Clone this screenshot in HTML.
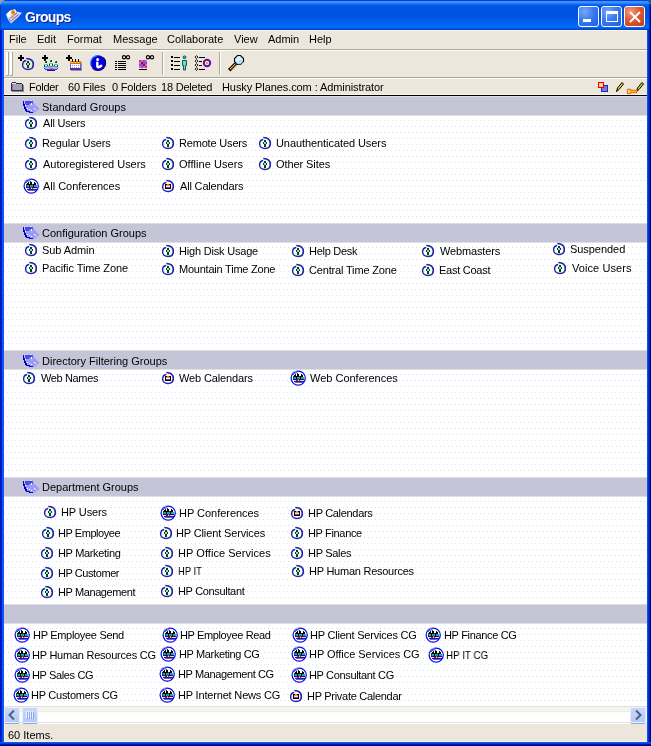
<!DOCTYPE html>
<html><head><meta charset="utf-8">
<style>
*{margin:0;padding:0;box-sizing:border-box}
html,body{width:651px;height:746px;overflow:hidden;background:#A7B4C4}
body{position:relative;font-family:"Liberation Sans",sans-serif;font-size:11px;color:#000}
.abs{position:absolute}
.t{position:absolute;font:11px/13px "Liberation Sans",sans-serif;white-space:nowrap;color:#000;will-change:transform}
.ic{position:absolute;overflow:visible}
#win{position:absolute;left:0;top:0;width:651px;height:746px;background:#0831D9;border-radius:7px 7px 0 0;overflow:hidden}
#title{position:absolute;left:0;top:0;width:651px;height:30px;
 background:linear-gradient(to bottom,#0A3FCE 0px,#0A3FCE 1px,#3A93FF 1px,#3A8FFF 3px,#0F6EF8 4px,#0661F0 5px,#0057E5 6px,#0053DE 8px,#0054E3 17px,#005AE9 20px,#0064F2 24px,#006CFB 27px,#0068F5 28px,#0046D2 29px,#0040C8 30px)}
#ttl{will-change:transform;position:absolute;left:25px;top:9px;font:bold 14px/16px "Liberation Sans",sans-serif;letter-spacing:-0.7px;color:#fff;text-shadow:1px 1px 0 #0A1E8C}
.tb{position:absolute;top:6px;width:21px;height:21px;border:1px solid #fff;border-radius:3px;
 background:radial-gradient(circle at 30% 25%,#77A7FF 0,#3A7BF2 45%,#2258DC 100%)}
.tb.cl{background:radial-gradient(circle at 30% 25%,#F29B80 0,#E0592F 45%,#C63A14 100%)}
#menu{position:absolute;left:4px;top:30px;width:643px;height:20px;background:#ECE6DD;border-bottom:1px solid #A9A994;box-shadow:inset 0 1px 0 #FFF6E8}
#menu span{position:absolute;top:3px;font:11px/13px "Liberation Sans",sans-serif;will-change:transform}
#tool{position:absolute;left:4px;top:50px;width:643px;height:28px;background:#ECE6DD;border-top:1px solid #fff;border-bottom:1px solid #A8A890}
#fbar{position:absolute;left:4px;top:78px;width:643px;height:18px;background:#ECE6DD;border-top:1px solid #fff;border-bottom:1px solid #000;box-shadow:inset 0 -1px 0 #FFF4E8}
.sec{position:absolute;left:4px;width:643px;background:#fff;overflow:hidden}
.sec .dots{position:absolute;left:0;top:0}
.hdr{position:absolute;left:0;top:0;width:643px;height:20px;background:#C6C5D7;border-top:1px solid #D9DFE2;border-bottom:1px solid #DCE3DF}
#hscroll{position:absolute;left:4px;top:706px;width:643px;height:18px;background:linear-gradient(to bottom,#E2E1DC 0,#E2E1DC 1px,#F4F4EC 1px,#F4F4EC 5px,#EAEAF8 5px,#EAEAF8 6px,#FFFBEE 6px,#FFFBEE 7px,#FFFFFF 7px,#FFFFFF 16px,#E6E3DE 16px,#E6E3DE 17px,#FFFFFF 17px)}
.sbb{position:absolute;top:1px;width:16px;height:16px;border-radius:2px;background:linear-gradient(to bottom,#C9D9FC,#B6CAF7);box-shadow:inset 0 0 0 1px #E8EEFC, 0 1px 0 #8EA8E0}
#status{position:absolute;left:4px;top:724px;width:643px;height:18px;background:#ECE6DD;border-bottom:1px solid #FCF2E2;border-left:1px solid #FCF2E2}
</style></head><body>
<svg width="0" height="0" style="position:absolute">
 <defs>
  <pattern id="dp" x="0" y="0" width="4" height="12" patternUnits="userSpaceOnUse">
   <rect x="0" y="0" width="1" height="1" fill="#D6DFFB"/>
   <rect x="3" y="6" width="1" height="1" fill="#D6DFFB"/>
  </pattern>
  <symbol id="ring" viewBox="0 0 14 14">
   <path d="M5.2 3.5 C2.8 3.8 1.6 5.9 1.6 8 C1.6 10.6 3.8 12.5 7 12.5 C10.2 12.5 12.4 10.6 12.4 7.6 C12.4 4.4 10.6 1.6 5.3 1.5" fill="none" stroke="#2424A8" stroke-width="1.45"/>
   <path d="M11.2 4 C12.6 6 12.6 9 11.2 10.8" fill="none" stroke="#2424A8" stroke-width="1"/>
  </symbol>
  <symbol id="iu" viewBox="0 0 14 14">
   <use href="#ring" width="14" height="14"/>
   <g shape-rendering="crispEdges">
   <rect x="6" y="4" width="2" height="7" fill="#004A00"/>
   <rect x="5" y="6" width="4" height="2" fill="#004A00"/>
   <rect x="6" y="6" width="2" height="2" fill="#6CE6F6"/>
   </g>
  </symbol>
  <symbol id="ik" viewBox="0 0 14 14">
   <use href="#ring" width="14" height="14"/>
   <g shape-rendering="crispEdges">
   <rect x="4" y="5" width="6" height="5" fill="#000"/>
   <rect x="5" y="6" width="4" height="1" fill="#F89A10"/>
   <rect x="6" y="5" width="2" height="1" fill="#D88A20"/>
   <rect x="5" y="7" width="4" height="1" fill="#ECEEFF"/>
   <rect x="5" y="8" width="4" height="1" fill="#9030D8"/>
   </g>
  </symbol>
  <symbol id="ic" viewBox="0 0 17 17">
   <circle cx="8.2" cy="8.1" r="7.1" fill="#fff" stroke="#0A0AEA" stroke-width="1.25"/>
   <path d="M1.6 3.6 Q3.6 1.1 6.8 1" fill="none" stroke="#A8A8F8" stroke-width="1"/>
   <path d="M2.8 5 Q4.6 2.8 7.2 2.6" fill="none" stroke="#3030D8" stroke-width="0.9"/>
   <g shape-rendering="crispEdges">
   <rect x="3" y="7" width="11" height="2" fill="#20A8A8"/>
   <rect x="3" y="6" width="1" height="4" fill="#005A28"/>
   <rect x="13" y="7" width="1" height="3" fill="#30B0A0"/>
   <rect x="4" y="5" width="2" height="2" fill="#000"/>
   <rect x="5" y="4" width="1" height="1" fill="#003000"/>
   <rect x="7" y="4" width="2" height="3" fill="#000"/>
   <rect x="7" y="3" width="1" height="1" fill="#006000"/>
   <rect x="11" y="5" width="2" height="2" fill="#000"/>
   <rect x="11" y="4" width="1" height="1" fill="#003000"/>
   <rect x="6" y="6" width="1" height="3" fill="#000"/>
   <rect x="10" y="6" width="1" height="3" fill="#000"/>
   <rect x="9" y="6" width="1" height="1" fill="#006040"/>
   <rect x="8" y="8" width="1" height="1" fill="#1060E0"/>
   <rect x="3" y="9" width="11" height="1" fill="#101090"/>
   <rect x="4" y="10" width="10" height="1" fill="#D4DCFF"/>
   <rect x="6" y="10" width="2" height="1" fill="#E00000"/>
   <rect x="8" y="9" width="1" height="1" fill="#F06000"/>
   <rect x="9" y="10" width="1" height="1" fill="#E02000"/>
   <rect x="10" y="10" width="1" height="1" fill="#F0D000"/>
   <rect x="4" y="11" width="10" height="1" fill="#1818A8"/>
   <rect x="5" y="12" width="8" height="1" fill="#6060D0"/>
   </g>
  </symbol>
  <symbol id="ig" viewBox="0 0 17 16">
   <path d="M1.5 4 L9.5 2.5 L16.5 10 L10 14.5 L5 13.5 L2 9 Z" fill="#9C9CF8"/>
   <g shape-rendering="crispEdges">
   <rect x="6" y="0" width="4" height="2" fill="#B8B8FC"/>
   <rect x="7" y="1" width="2" height="1" fill="#E0E0FF"/>
   <rect x="2" y="2" width="8" height="2" fill="#4848E8"/>
   <rect x="2" y="4" width="6" height="1" fill="#5858EC"/>
   <rect x="3" y="5" width="3" height="1" fill="#4040E0"/>
   <rect x="9" y="3" width="1" height="2" fill="#6A6AF0"/>
   <rect x="0" y="2" width="1" height="5" fill="#0000C8"/>
   <rect x="1" y="5" width="1" height="5" fill="#0000C8"/>
   <rect x="2" y="8" width="1" height="4" fill="#0000C8"/>
   <rect x="3" y="10" width="1" height="3" fill="#0000C8"/>
   <rect x="4" y="12" width="3" height="1" fill="#0000C8"/>
   <rect x="6" y="13" width="4" height="1" fill="#1010C0"/>
   <rect x="8" y="4" width="1" height="2" fill="#FFFFFF"/>
   <rect x="2" y="6" width="1" height="1" fill="#FFFFFF"/>
   <rect x="4" y="9" width="1" height="1" fill="#FFFFFF"/>
   <rect x="6" y="10" width="1" height="1" fill="#FFFFFF"/>
   <rect x="11" y="9" width="1" height="1" fill="#FFFFFF"/>
   <rect x="12" y="10" width="1" height="1" fill="#F0F0FF"/>
   <rect x="8" y="11" width="1" height="1" fill="#FFFFFF"/>
   <rect x="1" y="1" width="2" height="1" fill="#C8C8F4"/>
   </g>
  </symbol>
 </defs>
</svg>
<div class="abs" style="left:0;top:0;width:10px;height:10px;background:#8FA4BE"></div>
<div class="abs" style="left:641px;top:0;width:10px;height:10px;background:#125C96"></div>
<div id="win">
 <div class="abs" style="left:0;top:30px;width:4px;height:716px;background:linear-gradient(to right,#0014C8 0,#0014C8 1px,#001ED2 1px,#001ED2 2px,#0A56EA 2px,#0A56EA 3px,#0C5AEE 3px)"></div>
 <div class="abs" style="left:647px;top:30px;width:4px;height:716px;background:linear-gradient(to right,#0A54EA 0,#0A54EA 1px,#0036D6 1px,#0036D6 2px,#0016B4 2px,#0016B4 3px,#000C90 3px)"></div>
 <div class="abs" style="left:0;top:742px;width:651px;height:4px;background:linear-gradient(to bottom,#0858F0 0,#0858F0 1px,#0040E0 1px,#0040E0 2px,#0012A8 2px,#0012A8 3px,#00098C 3px)"></div>
 <div id="title"></div>
 <div class="abs" style="left:649px;top:4px;width:2px;height:26px;background:linear-gradient(to right,#0028C8 0,#0028C8 1px,#000E88 1px)"></div>
 <div class="abs" style="left:0;top:5px;width:1px;height:25px;background:#0838C8"></div>
 <div id="ttl">Groups</div>
 <div class="tb" style="left:578px"><div class="abs" style="left:4px;top:12px;width:8px;height:3px;background:#fff"></div></div>
 <div class="tb" style="left:601px"><div class="abs" style="left:4px;top:4px;width:12px;height:11px;border:1px solid #fff;border-top-width:3px"></div></div>
 <div class="tb cl" style="left:624px"><svg class="abs" style="left:4px;top:4px" width="12" height="12"><path d="M1 1 L11 11 M11 1 L1 11" stroke="#fff" stroke-width="2"/></svg></div>

 <div id="menu">
  <span style="left:5px">File</span><span style="left:33px">Edit</span><span style="left:63px">Format</span><span style="left:109px">Message</span><span style="left:163px">Collaborate</span><span style="left:230px">View</span><span style="left:264px">Admin</span><span style="left:305px">Help</span>
 </div>
 <div id="tool">
  <div class="abs" style="left:2px;top:1px;width:3px;height:24px;background:#fff;border-right:1px solid #A8A894;border-bottom:1px solid #A8A894"></div>
  <div class="abs" style="left:6px;top:1px;width:3px;height:24px;background:#fff;border-right:1px solid #A8A894;border-bottom:1px solid #A8A894"></div>
  <div class="abs" style="left:158px;top:1px;width:2px;height:23px;border-left:1px solid #ACA899;border-right:1px solid #fff"></div>
  <div class="abs" style="left:215px;top:1px;width:2px;height:23px;border-left:1px solid #ACA899;border-right:1px solid #fff"></div>
 </div>
 <div id="fbar">

 </div>
<div class="sec" style="top:96px;height:127px"><svg class="dots" width="643" height="126"><rect width="643" height="126" fill="url(#dp)"/></svg><div class="hdr"></div></div>
<svg class="ic" style="left:23px;top:99px" width="17" height="16"><use href="#ig" width="17" height="16"/></svg>
<span class="t" style="left:42px;top:101px;letter-spacing:0.014px">Standard Groups</span>
<div class="sec" style="top:223px;height:127px"><svg class="dots" width="643" height="126"><rect width="643" height="126" fill="url(#dp)"/></svg><div class="hdr"></div></div>
<svg class="ic" style="left:23px;top:225px" width="17" height="16"><use href="#ig" width="17" height="16"/></svg>
<span class="t" style="left:42px;top:227px;letter-spacing:0px">Configuration Groups</span>
<div class="sec" style="top:350px;height:127px"><svg class="dots" width="643" height="126"><rect width="643" height="126" fill="url(#dp)"/></svg><div class="hdr"></div></div>
<svg class="ic" style="left:23px;top:353px" width="17" height="16"><use href="#ig" width="17" height="16"/></svg>
<span class="t" style="left:42px;top:355px;letter-spacing:0px">Directory Filtering Groups</span>
<div class="sec" style="top:477px;height:127px"><svg class="dots" width="643" height="126"><rect width="643" height="126" fill="url(#dp)"/></svg><div class="hdr"></div></div>
<svg class="ic" style="left:23px;top:479px" width="17" height="16"><use href="#ig" width="17" height="16"/></svg>
<span class="t" style="left:42px;top:481px;letter-spacing:0px">Department Groups</span>
<div class="sec" style="top:604px;height:102px"><svg class="dots" width="643" height="101"><rect width="643" height="101" fill="url(#dp)"/></svg><div class="hdr"></div></div>
<svg class="ic" style="left:24px;top:116px" width="14" height="14"><use href="#iu" width="14" height="14"/></svg>
<span class="t" style="left:43px;top:117px;letter-spacing:-0.188px">All Users</span>
<svg class="ic" style="left:24px;top:136px" width="14" height="14"><use href="#iu" width="14" height="14"/></svg>
<span class="t" style="left:42px;top:137px;letter-spacing:-0.125px">Regular Users</span>
<svg class="ic" style="left:161px;top:136px" width="14" height="14"><use href="#iu" width="14" height="14"/></svg>
<span class="t" style="left:179px;top:137px;letter-spacing:-0.182px">Remote Users</span>
<svg class="ic" style="left:258px;top:136px" width="14" height="14"><use href="#iu" width="14" height="14"/></svg>
<span class="t" style="left:276px;top:137px;letter-spacing:-0.075px">Unauthenticated Users</span>
<svg class="ic" style="left:24px;top:157px" width="14" height="14"><use href="#iu" width="14" height="14"/></svg>
<span class="t" style="left:43px;top:158px;letter-spacing:-0.026px">Autoregistered Users</span>
<svg class="ic" style="left:161px;top:157px" width="14" height="14"><use href="#iu" width="14" height="14"/></svg>
<span class="t" style="left:179px;top:158px;letter-spacing:0.042px">Offline Users</span>
<svg class="ic" style="left:258px;top:157px" width="14" height="14"><use href="#iu" width="14" height="14"/></svg>
<span class="t" style="left:276px;top:158px;letter-spacing:-0.08px">Other Sites</span>
<svg class="ic" style="left:23px;top:178px" width="17" height="17"><use href="#ic" width="17" height="17"/></svg>
<span class="t" style="left:43px;top:180px;letter-spacing:-0.036px">All Conferences</span>
<svg class="ic" style="left:161px;top:179px" width="14" height="14"><use href="#ik" width="14" height="14"/></svg>
<span class="t" style="left:180px;top:180px;letter-spacing:-0.167px">All Calendars</span>
<svg class="ic" style="left:24px;top:243px" width="14" height="14"><use href="#iu" width="14" height="14"/></svg>
<span class="t" style="left:42px;top:244px;letter-spacing:-0.075px">Sub Admin</span>
<svg class="ic" style="left:161px;top:244px" width="14" height="14"><use href="#iu" width="14" height="14"/></svg>
<span class="t" style="left:179px;top:245px;letter-spacing:-0.193px">High Disk Usage</span>
<svg class="ic" style="left:291px;top:244px" width="14" height="14"><use href="#iu" width="14" height="14"/></svg>
<span class="t" style="left:309px;top:245px;letter-spacing:-0.288px">Help Desk</span>
<svg class="ic" style="left:421px;top:244px" width="14" height="14"><use href="#iu" width="14" height="14"/></svg>
<span class="t" style="left:440px;top:245px;letter-spacing:-0.144px">Webmasters</span>
<svg class="ic" style="left:552px;top:242px" width="14" height="14"><use href="#iu" width="14" height="14"/></svg>
<span class="t" style="left:570px;top:243px;letter-spacing:-0.05px">Suspended</span>
<svg class="ic" style="left:24px;top:261px" width="14" height="14"><use href="#iu" width="14" height="14"/></svg>
<span class="t" style="left:42px;top:262px;letter-spacing:-0.075px">Pacific Time Zone</span>
<svg class="ic" style="left:161px;top:262px" width="14" height="14"><use href="#iu" width="14" height="14"/></svg>
<span class="t" style="left:179px;top:263px;letter-spacing:-0.224px">Mountain Time Zone</span>
<svg class="ic" style="left:291px;top:263px" width="14" height="14"><use href="#iu" width="14" height="14"/></svg>
<span class="t" style="left:309px;top:264px;letter-spacing:-0.169px">Central Time Zone</span>
<svg class="ic" style="left:421px;top:263px" width="14" height="14"><use href="#iu" width="14" height="14"/></svg>
<span class="t" style="left:439px;top:264px;letter-spacing:-0.256px">East Coast</span>
<svg class="ic" style="left:553px;top:261px" width="14" height="14"><use href="#iu" width="14" height="14"/></svg>
<span class="t" style="left:572px;top:262px;letter-spacing:0.08px">Voice Users</span>
<svg class="ic" style="left:22px;top:371px" width="14" height="14"><use href="#iu" width="14" height="14"/></svg>
<span class="t" style="left:41px;top:372px;letter-spacing:-0.362px">Web Names</span>
<svg class="ic" style="left:161px;top:371px" width="14" height="14"><use href="#ik" width="14" height="14"/></svg>
<span class="t" style="left:179px;top:372px;letter-spacing:-0.142px">Web Calendars</span>
<svg class="ic" style="left:290px;top:370px" width="17" height="17"><use href="#ic" width="17" height="17"/></svg>
<span class="t" style="left:310px;top:372px;letter-spacing:-0.007px">Web Conferences</span>
<svg class="ic" style="left:43px;top:505px" width="14" height="14"><use href="#iu" width="14" height="14"/></svg>
<span class="t" style="left:61px;top:506px;letter-spacing:-0.114px">HP Users</span>
<svg class="ic" style="left:160px;top:505px" width="17" height="17"><use href="#ic" width="17" height="17"/></svg>
<span class="t" style="left:179px;top:507px;letter-spacing:-0.031px">HP Conferences</span>
<svg class="ic" style="left:290px;top:506px" width="14" height="14"><use href="#ik" width="14" height="14"/></svg>
<span class="t" style="left:308px;top:507px;letter-spacing:-0.318px">HP Calendars</span>
<svg class="ic" style="left:41px;top:526px" width="14" height="14"><use href="#iu" width="14" height="14"/></svg>
<span class="t" style="left:58px;top:527px;letter-spacing:-0.45px">HP Employee</span>
<svg class="ic" style="left:159px;top:526px" width="14" height="14"><use href="#iu" width="14" height="14"/></svg>
<span class="t" style="left:176px;top:527px;letter-spacing:-0.135px">HP Client Services</span>
<svg class="ic" style="left:290px;top:526px" width="14" height="14"><use href="#iu" width="14" height="14"/></svg>
<span class="t" style="left:308px;top:527px;letter-spacing:-0.344px">HP Finance</span>
<svg class="ic" style="left:40px;top:546px" width="14" height="14"><use href="#iu" width="14" height="14"/></svg>
<span class="t" style="left:58px;top:547px;letter-spacing:-0.327px">HP Marketing</span>
<svg class="ic" style="left:160px;top:546px" width="14" height="14"><use href="#iu" width="14" height="14"/></svg>
<span class="t" style="left:178px;top:547px;letter-spacing:0.047px">HP Office Services</span>
<svg class="ic" style="left:290px;top:546px" width="14" height="14"><use href="#iu" width="14" height="14"/></svg>
<span class="t" style="left:308px;top:547px;letter-spacing:-0.3px">HP Sales</span>
<svg class="ic" style="left:40px;top:566px" width="14" height="14"><use href="#iu" width="14" height="14"/></svg>
<span class="t" style="left:58px;top:567px;letter-spacing:-0.43px">HP Customer</span>
<svg class="ic" style="left:160px;top:564px" width="14" height="14"><use href="#iu" width="14" height="14"/></svg>
<span class="t" style="left:177.75px;top:565px;transform:scaleX(0.852);transform-origin:0 0">HP IT</span>
<svg class="ic" style="left:291px;top:564px" width="14" height="14"><use href="#iu" width="14" height="14"/></svg>
<span class="t" style="left:309px;top:565px;letter-spacing:-0.247px">HP Human Resources</span>
<svg class="ic" style="left:40px;top:585px" width="14" height="14"><use href="#iu" width="14" height="14"/></svg>
<span class="t" style="left:58px;top:586px;letter-spacing:-0.4px">HP Management</span>
<svg class="ic" style="left:160px;top:584px" width="14" height="14"><use href="#iu" width="14" height="14"/></svg>
<span class="t" style="left:178px;top:585px;letter-spacing:-0.333px">HP Consultant</span>
<svg class="ic" style="left:14px;top:627px" width="17" height="17"><use href="#ic" width="17" height="17"/></svg>
<span class="t" style="left:33px;top:629px;letter-spacing:-0.307px">HP Employee Send</span>
<svg class="ic" style="left:162px;top:627px" width="17" height="17"><use href="#ic" width="17" height="17"/></svg>
<span class="t" style="left:180px;top:629px;letter-spacing:-0.373px">HP Employee Read</span>
<svg class="ic" style="left:292px;top:627px" width="17" height="17"><use href="#ic" width="17" height="17"/></svg>
<span class="t" style="left:310px;top:629px;letter-spacing:-0.21px">HP Client Services CG</span>
<svg class="ic" style="left:425px;top:627px" width="17" height="17"><use href="#ic" width="17" height="17"/></svg>
<span class="t" style="left:444px;top:629px;letter-spacing:-0.325px">HP Finance CG</span>
<svg class="ic" style="left:14px;top:647px" width="17" height="17"><use href="#ic" width="17" height="17"/></svg>
<span class="t" style="left:32px;top:649px;letter-spacing:-0.24px">HP Human Resources CG</span>
<svg class="ic" style="left:160px;top:646px" width="17" height="17"><use href="#ic" width="17" height="17"/></svg>
<span class="t" style="left:179px;top:648px;letter-spacing:-0.364px">HP Marketing CG</span>
<svg class="ic" style="left:291px;top:646px" width="17" height="17"><use href="#ic" width="17" height="17"/></svg>
<span class="t" style="left:309px;top:648px;letter-spacing:-0.04px">HP Office Services CG</span>
<svg class="ic" style="left:428px;top:647px" width="17" height="17"><use href="#ic" width="17" height="17"/></svg>
<span class="t" style="left:446.01px;top:649px;transform:scaleX(0.891);transform-origin:0 0">HP IT CG</span>
<svg class="ic" style="left:14px;top:667px" width="17" height="17"><use href="#ic" width="17" height="17"/></svg>
<span class="t" style="left:32px;top:669px;letter-spacing:-0.37px">HP Sales CG</span>
<svg class="ic" style="left:159px;top:666px" width="17" height="17"><use href="#ic" width="17" height="17"/></svg>
<span class="t" style="left:178px;top:668px;letter-spacing:-0.387px">HP Management CG</span>
<svg class="ic" style="left:291px;top:667px" width="17" height="17"><use href="#ic" width="17" height="17"/></svg>
<span class="t" style="left:309px;top:669px;letter-spacing:-0.34px">HP Consultant CG</span>
<svg class="ic" style="left:13px;top:687px" width="17" height="17"><use href="#ic" width="17" height="17"/></svg>
<span class="t" style="left:31px;top:689px;letter-spacing:-0.264px">HP Customers CG</span>
<svg class="ic" style="left:159px;top:687px" width="17" height="17"><use href="#ic" width="17" height="17"/></svg>
<span class="t" style="left:178px;top:689px;letter-spacing:-0.178px">HP Internet News CG</span>
<svg class="ic" style="left:289px;top:689px" width="14" height="14"><use href="#ik" width="14" height="14"/></svg>
<span class="t" style="left:307px;top:690px;letter-spacing:-0.289px">HP Private Calendar</span>
<span class="t" style="left:29px;top:81px;letter-spacing:-0.28px">Folder</span>
<span class="t" style="left:68px;top:81px;letter-spacing:-0.143px">60 Files</span>
<span class="t" style="left:112px;top:81px;letter-spacing:-0.175px">0 Folders</span>
<span class="t" style="left:161px;top:81px;letter-spacing:-0.211px">18 Deleted</span>
<span class="t" style="left:222px;top:81px;letter-spacing:-0.087px">Husky Planes.com : Administrator</span>

 <svg class="abs" style="left:0;top:0" width="651" height="100">
  <!-- add user -->
  <path d="M18 57h6v2h-6z M20 55h2v6h-2z" fill="#000" shape-rendering="crispEdges"/>
  <use href="#iu" x="21" y="57" width="14" height="14"/>
  <!-- add conference -->
  <path d="M42 57h6v2h-6z M44 55h2v6h-2z" fill="#000" shape-rendering="crispEdges"/>
  <g shape-rendering="crispEdges">
   <rect x="45" y="61" width="2" height="2" fill="#005A10"/><rect x="45" y="61" width="1" height="1" fill="#30B0A0"/>
   <rect x="50" y="60" width="2" height="2" fill="#005A10"/><rect x="50" y="60" width="1" height="1" fill="#30B0A0"/>
   <rect x="55" y="61" width="2" height="2" fill="#005A10"/><rect x="55" y="61" width="1" height="1" fill="#30B0A0"/>
   <rect x="44" y="65" width="4" height="2" fill="#005A10"/><rect x="45" y="65" width="2" height="2" fill="#C0FFE0"/><rect x="44" y="64" width="4" height="1" fill="#40D0D0"/>
   <rect x="49" y="64" width="4" height="2" fill="#005A10"/><rect x="50" y="64" width="2" height="2" fill="#C0FFE0"/><rect x="49" y="63" width="4" height="1" fill="#40D0D0"/>
   <rect x="54" y="65" width="4" height="2" fill="#005A10"/><rect x="55" y="65" width="2" height="2" fill="#C0FFE0"/><rect x="54" y="64" width="4" height="1" fill="#40D0D0"/>
   <rect x="45" y="66" width="12" height="1" fill="#8080F0"/>
   <rect x="44" y="67" width="14" height="2" fill="#B0B0FF"/>
   <rect x="44" y="68" width="1" height="1" fill="#3030C0"/><rect x="57" y="68" width="1" height="1" fill="#3030C0"/>
   <rect x="45" y="69" width="12" height="1" fill="#4040D0"/>
   <rect x="47" y="70" width="8" height="1" fill="#1818A8"/>
   <rect x="49" y="67" width="2" height="1" fill="#F0A000"/><rect x="50" y="68" width="3" height="1" fill="#E07000"/>
  </g>
  <!-- add calendar -->
  <path d="M66 57h6v2h-6z M68 55h2v6h-2z" fill="#000" shape-rendering="crispEdges"/>
  <g shape-rendering="crispEdges">
   <rect x="71" y="62" width="11" height="9" fill="#9A968C"/>
   <rect x="70" y="61" width="11" height="9" fill="#6A2AA8"/>
   <rect x="70" y="61" width="11" height="3" fill="#F08A00"/>
   <rect x="70" y="63" width="11" height="1" fill="#E07000"/>
   <rect x="70" y="64" width="11" height="4" fill="#6464E4"/>
   <rect x="71" y="64" width="9" height="4" fill="#FFFFFF"/>
   <rect x="72" y="65" width="1" height="1" fill="#8080F0"/><rect x="74" y="65" width="1" height="1" fill="#8080F0"/><rect x="76" y="65" width="1" height="1" fill="#8080F0"/><rect x="78" y="65" width="1" height="1" fill="#8080F0"/>
   <rect x="72" y="67" width="1" height="1" fill="#A0A0F0"/><rect x="74" y="67" width="1" height="1" fill="#A0A0F0"/><rect x="76" y="67" width="1" height="1" fill="#A0A0F0"/><rect x="78" y="67" width="1" height="1" fill="#A0A0F0"/>
   <rect x="70" y="68" width="11" height="2" fill="#6424A4"/>
   <rect x="72" y="59" width="1" height="3" fill="#000"/><rect x="75" y="59" width="1" height="3" fill="#000"/><rect x="78" y="59" width="1" height="3" fill="#000"/>
   <rect x="72" y="62" width="1" height="1" fill="#FFF0D0"/><rect x="75" y="62" width="1" height="1" fill="#FFF0D0"/><rect x="78" y="62" width="1" height="1" fill="#FFF0D0"/>
   <rect x="71" y="62" width="1" height="1" fill="#F8D000"/>
  </g>
  <!-- info -->
  <circle cx="98" cy="62.9" r="7.6" fill="#0000DC"/>
  <path d="M92.6 68.3 A7.6 7.6 0 0 0 103.4 57.5" fill="none" stroke="#14006E" stroke-width="1.1"/>
  <path d="M91 65.5 A7.4 7.4 0 0 1 97 55.6" fill="none" stroke="#2A9CFF" stroke-width="1.1"/>
  <circle cx="97.6" cy="59.6" r="1.5" fill="#fff"/>
  <path d="M97.3 62.6 V66.2 Q97.8 68.4 101.2 65.8" fill="none" stroke="#fff" stroke-width="2.4" stroke-linecap="round"/>
  <!-- list infinity -->
  <g shape-rendering="crispEdges" fill="#000">
   <rect x="115" y="61" width="2" height="1"/><rect x="118" y="61" width="8" height="1"/>
   <rect x="115" y="63" width="2" height="1"/><rect x="118" y="63" width="8" height="1"/>
   <rect x="115" y="65" width="2" height="1"/><rect x="118" y="65" width="8" height="1"/>
   <rect x="115" y="67" width="2" height="1"/><rect x="118" y="67" width="8" height="1"/>
   <rect x="115" y="69" width="2" height="1"/><rect x="118" y="69" width="8" height="1"/>
  </g>
  <circle cx="124" cy="57.2" r="1.6" fill="#fff" stroke="#000" stroke-width="1.2"/>
  <circle cx="128" cy="57.2" r="1.6" fill="#fff" stroke="#000" stroke-width="1.2"/>
  <!-- pink -->
  <g shape-rendering="crispEdges">
   <rect x="139" y="60" width="8" height="8" fill="#FF50D0"/>
   <rect x="139" y="60" width="2" height="2" fill="#9050B0"/><rect x="143" y="60" width="2" height="2" fill="#9050B0"/>
   <rect x="141" y="62" width="2" height="2" fill="#A00050"/><rect x="143" y="62" width="2" height="2" fill="#5070E0"/>
   <rect x="141" y="64" width="2" height="2" fill="#5070E0"/><rect x="143" y="64" width="2" height="2" fill="#A00050"/>
   <rect x="139" y="64" width="2" height="2" fill="#9050B0"/><rect x="145" y="62" width="2" height="2" fill="#9050B0"/>
   <rect x="141" y="66" width="2" height="2" fill="#9050B0"/><rect x="145" y="66" width="2" height="2" fill="#9050B0"/>
   <rect x="139" y="69" width="8" height="1" fill="#000"/>
  </g>
  <circle cx="148" cy="57.2" r="1.6" fill="#fff" stroke="#000" stroke-width="1.2"/>
  <circle cx="152" cy="57.2" r="1.6" fill="#fff" stroke="#000" stroke-width="1.2"/>
  <!-- list person -->
  <g shape-rendering="crispEdges" fill="#000">
   <rect x="171" y="56" width="2" height="2"/><rect x="174" y="56.5" width="6" height="1.5"/>
   <rect x="171" y="60" width="2" height="2"/><rect x="174" y="60.5" width="6" height="1.5"/>
   <rect x="171" y="64" width="2" height="2"/><rect x="174" y="64.5" width="6" height="1.5"/>
   <rect x="171" y="68" width="2" height="2"/><rect x="174" y="68.5" width="6" height="1.5"/>
  </g>
  <circle cx="184.5" cy="57.3" r="1.4" fill="#30C0B0" stroke="#00503A" stroke-width="0.9"/>
  <path d="M182.5 60.5 h4 v5 h-1 v4.5 h-2 v-4.5 h-1 z" fill="#60E0D0" stroke="#00503A" stroke-width="0.9"/>
  <!-- list circle -->
  <g fill="none" stroke="#000" stroke-width="0.9">
   <path d="M196.5 55.6 L198 57.1 L196.5 58.6 L195 57.1 Z"/>
   <path d="M196.5 59.6 L198 61.1 L196.5 62.6 L195 61.1 Z"/>
   <path d="M196.5 63.6 L198 65.1 L196.5 66.6 L195 65.1 Z"/>
   <path d="M196.5 67.6 L198 69.1 L196.5 70.6 L195 69.1 Z"/>
  </g>
  <g shape-rendering="crispEdges" fill="#000">
   <rect x="199" y="56.5" width="6" height="1.2"/><rect x="199" y="60.5" width="3" height="1.2"/>
   <rect x="199" y="64.5" width="3" height="1.2"/><rect x="199" y="68.5" width="6" height="1.2"/>
  </g>
  <circle cx="207" cy="63" r="3.2" fill="none" stroke="#6010A0" stroke-width="2"/>
  <circle cx="207" cy="63" r="1.1" fill="#F09020"/>
  <!-- magnifier -->
  <path d="M229.2 70.2 L236.5 62.9" stroke="#000" stroke-width="3.4"/>
  <path d="M229.9 69.2 L235.6 63.5" stroke="#F8E000" stroke-width="1"/>
  <path d="M230.6 69.9 L236.2 64.3" stroke="#F07020" stroke-width="0.9"/>
  <path d="M237.5 55.5 h3 l3 3 v3 l-3 3 h-3 l-3 -3 v-3 z" fill="#C8F4FF" stroke="#000" stroke-width="1.1"/>
  <path d="M236 62.5 l1.8 1.3 h3 l1.8 -1.8" fill="none" stroke="#B0A8F0" stroke-width="1"/>
  <path d="M239 62 l2 -2" stroke="#9090F0" stroke-width="0.8"/>
  <!-- title icon -->
  <path d="M6 14.5 L10 10.5 L15 9 L16.5 11.5 L22 12.8 L17.5 18 L11 23.5 L8 19.5 Z" fill="#D8D8F8"/>
  <path d="M6.3 14.3 L10 10.8 L12.5 10.5 L10 16.5 L8 17 Z" fill="#FFFFFF"/>
  <path d="M14.5 9.5 L16.2 11.6 L15 14 Z" fill="#F4F4FF"/>
  <path d="M11.5 20.5 L18.5 14.5 M10.5 18 L17 12.8 M13 22.5 L20 16" stroke="#5050B0" stroke-width="1"/>
  <path d="M9 18.5 L11 21.5" stroke="#8080C8" stroke-width="1"/>
  <circle cx="13" cy="12.3" r="1.4" fill="#C06000" stroke="#F09000" stroke-width="1.2"/>
  <rect x="12.4" y="13.6" width="1.4" height="5.4" fill="#F8B800"/>
  <!-- folder bar icon -->
  <g shape-rendering="crispEdges">
   <rect x="12" y="85" width="12" height="7" fill="#8E8C88"/>
   <rect x="12" y="82" width="4" height="1" fill="#2A2A66"/>
   <rect x="11" y="83" width="1" height="8" fill="#2A2A66"/>
   <rect x="16" y="83" width="6" height="1" fill="#2A2A66"/>
   <rect x="22" y="84" width="1" height="7" fill="#2A2A66"/>
   <rect x="11" y="90" width="12" height="1" fill="#2A2A66"/>
   <rect x="12" y="84" width="10" height="6" fill="#A2A2AA"/>
   <rect x="12" y="83" width="4" height="1" fill="#E4E4EC"/>
   <rect x="12" y="84" width="1" height="6" fill="#B060B8"/>
  </g>
  <!-- folder bar right icons -->
  <g shape-rendering="crispEdges">
   <rect x="601" y="85" width="7" height="7" fill="#2424C0"/>
   <rect x="602" y="86" width="5" height="5" fill="#7A7AD8"/>
   <rect x="598" y="82" width="6" height="6" fill="#E00000"/>
   <rect x="599" y="83" width="4" height="4" fill="#FFD0A0"/>
  </g>
  <path d="M616.5 91.5 L617.5 88 L622 82.5 L623.5 84 L619 89.5 Z" fill="#F8D000" stroke="#000" stroke-width="1"/>
  <path d="M636.5 91.5 L637.5 88 L642 82.5 L643.5 84 L639 89.5 Z" fill="#F8D000" stroke="#000" stroke-width="1"/>
  <path d="M627.5 89.5 h3 v1 h6 v2 h-6 v1 h-3 z" fill="none" stroke="#F08000" stroke-width="1.3"/>
 </svg>

 <div id="hscroll">
  <div class="sbb" style="left:0px"><svg width="16" height="16" style="position:absolute;left:0;top:0"><path d="M10 3.5 L5.5 8 L10 12.5" fill="none" stroke="#4D6185" stroke-width="2"/></svg></div>
  <div class="sbb" style="left:18px"><svg width="16" height="16" style="position:absolute;left:0;top:0"><path d="M4.5 4v7 M6.5 4v7 M8.5 4v7 M10.5 4v7" stroke="#EEF3FF" stroke-width="1"/><path d="M5.5 5v7 M7.5 5v7 M9.5 5v7 M11.5 5v7" stroke="#8CA6E6" stroke-width="1"/></svg></div>
  <div class="sbb" style="left:626px"><svg width="16" height="16" style="position:absolute;left:0;top:0"><path d="M6 3.5 L10.5 8 L6 12.5" fill="none" stroke="#4D6185" stroke-width="2"/></svg></div>
 </div>
 <div id="status"><span class="t" style="left:3px;top:5px">60 Items.</span></div>
</div>
</body></html>
